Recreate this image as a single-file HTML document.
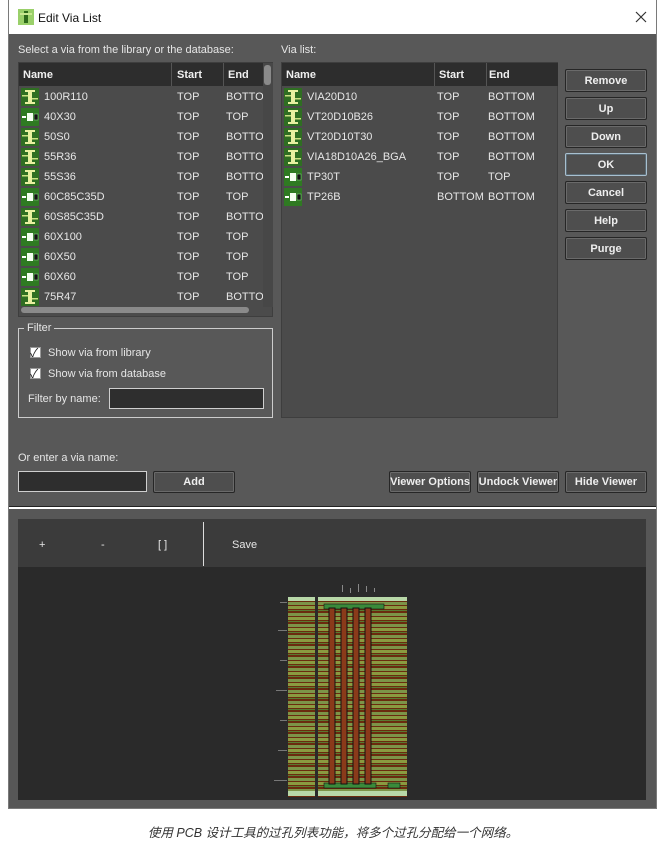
<!DOCTYPE html>
<html><head><meta charset="utf-8"><style>
*{margin:0;padding:0;box-sizing:border-box}
body{width:666px;height:849px;background:#fff;position:relative;overflow:hidden;font-family:"Liberation Sans","Noto Sans CJK SC",sans-serif;font-size:11px;color:#e6e6e6}
.a{position:absolute}
.win{left:8px;top:0;width:649px;height:809px;border:1px solid #7a7a7a;border-top:none}
.title{left:9px;top:0;width:647px;height:34px;background:#fff;color:#111;font-size:12px}
.body{left:9px;top:34px;width:647px;height:473px;background:#585858}
.list{background:#4b4b4b;border:1px solid #3e3e3e}
.hdr{background:#2d2d2d;height:23px;color:#f0f0f0;font-weight:bold;font-size:11px}
.hdr span{position:absolute;top:6px}
.hdr i{position:absolute;top:0;width:1px;height:23px;background:#555}
.row{position:absolute;height:20px;left:0;right:0}
.row span{position:absolute;top:4px}
.ic{position:absolute;left:2px;top:1px}
.btn{position:absolute;background:#4e4e4e;border:1px solid #262626;box-shadow:inset 0 0 0 1px #6a6a6a;color:#eee;font-weight:bold;text-align:center;font-size:11px;border-radius:2px}
.inp{position:absolute;background:#2e2e2e;border:1px solid #cfcfcf}
.cb{position:absolute;width:11px;height:11px;background:#fff;border:1px solid #999}
</style></head><body>
<div class="a title">
  <svg class="a" style="left:9px;top:9px" width="16" height="16"><rect width="16" height="16" fill="#9ad06a"/><rect x="6" y="2" width="4" height="12" fill="#2d6a1a"/><rect x="2" y="4" width="12" height="2" fill="#c8e890"/></svg>
  <span class="a" style="left:29px;top:11px">Edit Via List</span>
  <svg class="a" style="left:626px;top:11px" width="12" height="12"><path d="M1 1L11 11M11 1L1 11" stroke="#333" stroke-width="1.2"/></svg>
</div>
<div class="a body"></div>
<div class="a" style="left:9px;top:506px;width:647px;height:1px;background:#222"></div>
<div class="a" style="left:9px;top:507px;width:647px;height:2px;background:#fff"></div>
<div class="a" style="left:9px;top:509px;width:647px;height:300px;background:#575757"></div>
<div class="a" style="left:18px;top:519px;width:628px;height:48px;background:#3b3b3b"></div>
<div class="a" style="left:18px;top:567px;width:628px;height:233px;background:#2a2a2a"></div>
<div class="a" style="left:203px;top:522px;width:1px;height:44px;background:#ddd"></div>
<span class="a" style="left:39px;top:539px">+</span>
<span class="a" style="left:101px;top:539px">-</span>
<span class="a" style="left:158px;top:539px">[ ]</span>
<span class="a" style="left:232px;top:539px">Save</span>
<div class="a win"></div>

<span class="a" style="left:18px;top:44px">Select a via from the library or the database:</span>
<span class="a" style="left:281px;top:44px">Via list:</span>

<div class="a list" style="left:18px;top:62px;width:255px;height:255px">
  <div class="hdr a" style="left:0;top:0;width:244px"><span style="left:4px">Name</span><i style="left:152px"></i><span style="left:158px">Start</span><i style="left:204px"></i><span style="left:209px">End</span></div>
  <div class="a" style="left:244px;top:0;width:10px;height:244px;background:#474747"></div>
  <div class="a" style="left:245px;top:2px;width:7px;height:20px;background:#8a8a8a;border-radius:3px"></div>
  <div class="a" style="left:2px;top:244px;width:228px;height:6px;background:#8a8a8a;border-radius:3px"></div>
  <div id="L" class="a" style="left:0;top:24px;width:244px;height:220px;overflow:hidden"></div>
</div>
<div class="a list" style="left:281px;top:62px;width:277px;height:356px">
  <div class="hdr a" style="left:0;top:0;width:276px"><span style="left:4px">Name</span><i style="left:152px"></i><span style="left:157px">Start</span><i style="left:204px"></i><span style="left:207px">End</span></div>
  <div id="R" class="a" style="left:0;top:24px;width:276px;height:130px"></div>
</div>

<div class="btn" style="left:565px;top:69px;width:82px;height:23px;line-height:22px">Remove</div>
<div class="btn" style="left:565px;top:97px;width:82px;height:23px;line-height:22px">Up</div>
<div class="btn" style="left:565px;top:125px;width:82px;height:23px;line-height:22px">Down</div>
<div class="btn" style="left:565px;top:153px;width:82px;height:23px;line-height:22px;border-color:#a8c0d0;box-shadow:inset 0 0 0 1px #5a6a74">OK</div>
<div class="btn" style="left:565px;top:181px;width:82px;height:23px;line-height:22px">Cancel</div>
<div class="btn" style="left:565px;top:209px;width:82px;height:23px;line-height:22px">Help</div>
<div class="btn" style="left:565px;top:237px;width:82px;height:23px;line-height:22px">Purge</div>

<div class="a" style="left:18px;top:328px;width:255px;height:90px;border:1px solid #ccc"></div>
<span class="a" style="left:24px;top:322px;background:#585858;padding:0 3px">Filter</span>
<div class="cb" style="left:30px;top:347px"></div><span class="a" style="left:30px;top:344px;color:#222;font-size:12px">✓</span>
<span class="a" style="left:48px;top:347px">Show via from library</span>
<div class="cb" style="left:30px;top:368px"></div><span class="a" style="left:30px;top:365px;color:#222;font-size:12px">✓</span>
<span class="a" style="left:48px;top:368px">Show via from database</span>
<span class="a" style="left:28px;top:393px">Filter by name:</span>
<div class="inp" style="left:109px;top:388px;width:155px;height:21px"></div>

<span class="a" style="left:18px;top:452px">Or enter a via name:</span>
<div class="inp" style="left:18px;top:471px;width:129px;height:21px"></div>
<div class="btn" style="left:153px;top:471px;width:82px;height:22px;line-height:21px">Add</div>
<div class="btn" style="left:389px;top:471px;width:82px;height:22px;line-height:21px">Viewer Options</div>
<div class="btn" style="left:477px;top:471px;width:82px;height:22px;line-height:21px">Undock Viewer</div>
<div class="btn" style="left:565px;top:471px;width:82px;height:22px;line-height:21px">Hide Viewer</div>

<svg class="a" style="left:270px;top:580px" width="150" height="220">
  <defs>
    <pattern id="st" width="10" height="11" patternUnits="userSpaceOnUse">
      <rect width="10" height="11" fill="#6b2a0e"/><rect y="0" width="10" height="3" fill="#7c9448"/><rect y="4" width="10" height="3" fill="#8a9a40"/><rect y="8" width="10" height="1" fill="#5a7a30"/>
    </pattern>
  </defs>
  <g fill="#888"><rect x="72" y="5" width="1" height="7"/><rect x="80" y="8" width="1" height="5"/><rect x="88" y="4" width="1" height="8"/><rect x="96" y="6" width="1" height="6"/><rect x="104" y="8" width="1" height="4"/></g>
  <rect x="18" y="17" width="27" height="200" fill="url(#st)"/>
  <rect x="48" y="17" width="89" height="200" fill="url(#st)"/>
  <rect x="18" y="17" width="27" height="4" fill="#b8d8a8"/><rect x="48" y="17" width="89" height="4" fill="#b8d8a8"/>
  <rect x="18" y="211" width="27" height="5" fill="#b8d8a8"/><rect x="48" y="211" width="89" height="5" fill="#b8d8a8"/>
  <rect x="54" y="24" width="60" height="5" fill="#3a8a3a" stroke="#111" stroke-width="0.6"/>
  <rect x="54" y="203" width="52" height="5" fill="#3a8a3a" stroke="#111" stroke-width="0.6"/>
  <rect x="118" y="203" width="12" height="5" fill="#3a8a3a" stroke="#111" stroke-width="0.6"/>
  <g fill="#8a3a1a" stroke="#111" stroke-width="1"><rect x="59" y="28" width="6" height="176"/><rect x="71" y="28" width="6" height="176"/><rect x="83" y="28" width="6" height="176"/><rect x="95" y="28" width="6" height="176"/></g>
  <g fill="#777"><rect x="10" y="22" width="7" height="1"/><rect x="8" y="50" width="9" height="1"/><rect x="10" y="80" width="7" height="1"/><rect x="6" y="110" width="11" height="1"/><rect x="10" y="140" width="7" height="1"/><rect x="8" y="170" width="9" height="1"/><rect x="4" y="200" width="13" height="1"/></g>
</svg>

<div class="a" style="left:0;top:822px;width:666px;text-align:center;font-style:italic;color:#333;font-size:12.5px">使用 PCB 设计工具的过孔列表功能，将多个过孔分配给一个网络。</div>

<script>
function ic(t){
 if(t=='v')return '<svg class="ic" width="18" height="18"><rect width="18" height="18" fill="#2f6e22"/><rect x="7" y="2" width="4" height="14" fill="#e8f0a0"/><rect x="4" y="2" width="10" height="2" fill="#e8f0a0"/><rect x="4" y="14" width="10" height="2" fill="#e8f0a0"/><rect x="1" y="7" width="6" height="1.5" fill="#c8e080"/><rect x="11" y="10" width="6" height="1.5" fill="#c8e080"/></svg>';
 return '<svg class="ic" width="18" height="18"><rect width="18" height="18" fill="#2f7a22"/><rect x="1" y="8" width="4" height="2" fill="#fff"/><rect x="6" y="5" width="6" height="8" fill="#f4fff0"/><rect x="13" y="6" width="4" height="6" fill="#111" stroke="#8c8" stroke-width="0.6"/></svg>';
}
var L=[['v','100R110','TOP','BOTTO'],['s','40X30','TOP','TOP'],['v','50S0','TOP','BOTTO'],['v','55R36','TOP','BOTTO'],['v','55S36','TOP','BOTTO'],['s','60C85C35D','TOP','TOP'],['v','60S85C35D','TOP','BOTTO'],['s','60X100','TOP','TOP'],['s','60X50','TOP','TOP'],['s','60X60','TOP','TOP'],['v','75R47','TOP','BOTTO']];
var R=[['v','VIA20D10','TOP','BOTTOM'],['v','VT20D10B26','TOP','BOTTOM'],['v','VT20D10T30','TOP','BOTTOM'],['v','VIA18D10A26_BGA','TOP','BOTTOM'],['s','TP30T','TOP','TOP'],['s','TP26B','BOTTOM','BOTTOM']];
function f(id,a,s,e){var h='';a.forEach(function(r,i){h+='<div class="row" style="top:'+(i*20)+'px">'+ic(r[0])+'<span style="left:25px">'+r[1]+'</span><span style="left:'+s+'px">'+r[2]+'</span><span style="left:'+e+'px">'+r[3]+'</span></div>';});document.getElementById(id).innerHTML=h;}
f('L',L,158,207);f('R',R,155,206);
</script>
</body></html>
